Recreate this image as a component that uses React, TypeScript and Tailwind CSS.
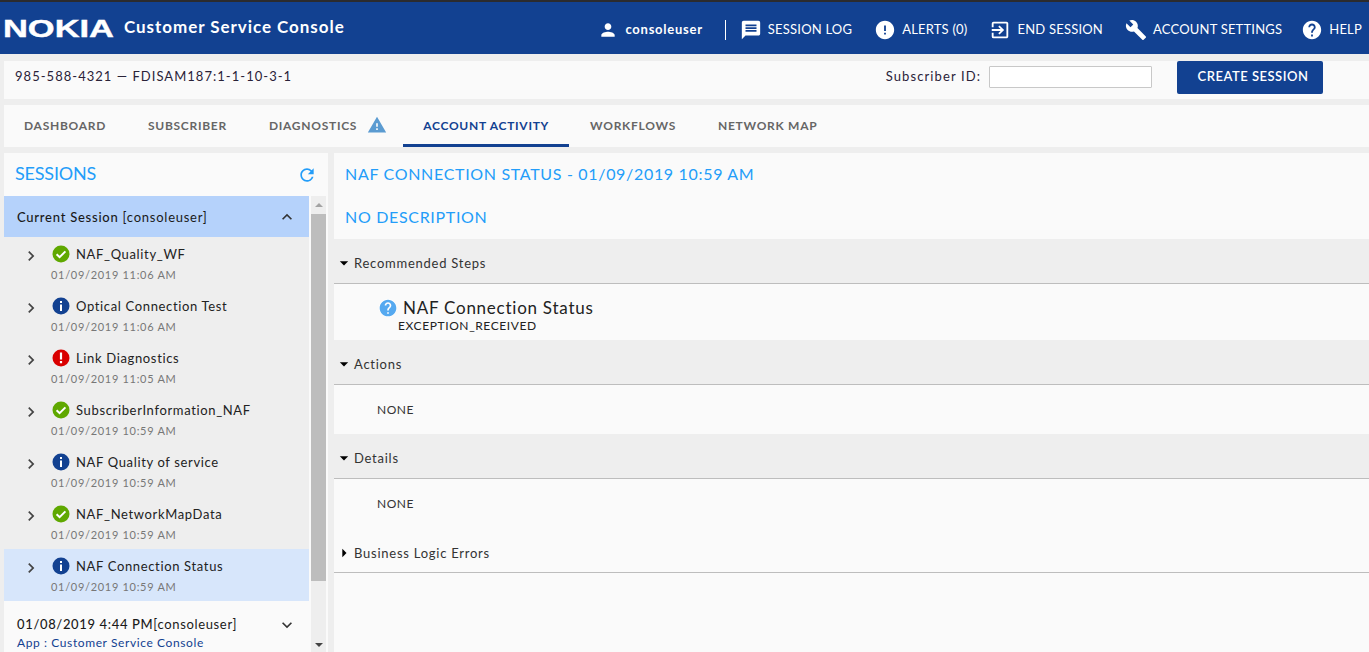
import { MdPerson, MdMessage, MdError, MdExitToApp, MdBuild, MdHelp, MdRefresh, MdExpandLess, MdExpandMore, MdChevronRight, MdArrowDropDown, MdArrowRight, MdWarning } from 'react-icons/md';

type Status = 'ok' | 'info' | 'error';

const sessions: { name: string; date: string; status: Status; active?: boolean }[] = [
  { name: 'NAF_Quality_WF', date: '01/09/2019 11:06 AM', status: 'ok' },
  { name: 'Optical Connection Test', date: '01/09/2019 11:06 AM', status: 'info' },
  { name: 'Link Diagnostics', date: '01/09/2019 11:05 AM', status: 'error' },
  { name: 'SubscriberInformation_NAF', date: '01/09/2019 10:59 AM', status: 'ok' },
  { name: 'NAF Quality of service', date: '01/09/2019 10:59 AM', status: 'info' },
  { name: 'NAF_NetworkMapData', date: '01/09/2019 10:59 AM', status: 'ok' },
  { name: 'NAF Connection Status', date: '01/09/2019 10:59 AM', status: 'info', active: true },
];

const tabs = ['DASHBOARD', 'SUBSCRIBER', 'DIAGNOSTICS', 'ACCOUNT ACTIVITY', 'WORKFLOWS', 'NETWORK MAP'];

const tabPadding = (t: string) => {
  if (t === 'DASHBOARD') return 'pl-[20px] pr-[21px]';
  if (t === 'DIAGNOSTICS') return 'pl-[21px] pr-[16px]';
  if (t === 'ACCOUNT ACTIVITY') return 'px-[20px]';
  return 'px-[21px]';
};

const StatusIcon = ({ status }: { status: Status }) => {
  const fill = status === 'ok' ? '#5fa800' : status === 'info' ? '#124191' : '#d90000';
  return (
    <svg viewBox="0 0 18 18" className="w-[18px] h-[18px] shrink-0">
      <circle cx="9" cy="9" r="8.5" fill={fill} />
      {status === 'ok' && <path d="M4.6 9.2l3 3 5.8-5.8" fill="none" stroke="#fff" strokeWidth="2" />}
      {status === 'info' && <path d="M8 4h2v2H8zM8 7.5h2V14H8z" fill="#fff" />}
      {status === 'error' && <path d="M7.9 3.6h2.2v7H7.9zM7.9 12h2.2v2.2H7.9z" fill="#fff" />}
    </svg>
  );
};

const NavItem = ({ icon, label, className = '' }: { icon: React.ReactNode; label: string; className?: string }) => (
  <div className={`flex items-center gap-[6px] text-[13px] tracking-[0.2px] text-white ${className}`}>
    {icon}
    <span>{label}</span>
  </div>
);

const SectionHeader = ({ label, open = true, bg = 'bg-[#eeeeee]', h = 'h-[45px]' }: { label: string; open?: boolean; bg?: string; h?: string }) => (
  <div className={`${bg} ${h} flex items-center pt-[4px] border-b border-[#bdbdbd] text-[13px] tracking-[0.75px] text-[#333] shrink-0`}>
    <span className="w-[20px] flex justify-center">
      {open ? <MdArrowDropDown className="w-[20px] h-[20px] text-black" /> : <MdArrowRight className="w-[20px] h-[20px] text-black" />}
    </span>
    <span className="pt-[2px]">{label}</span>
  </div>
);

const App = () => {
  return (
    <div className="h-[652px] w-[1369px] overflow-hidden bg-[#eeeeee] flex flex-col font-['Lato','Noto_Sans',sans-serif]">
      <header className="h-[54px] shrink-0 bg-[#124191] border-t-[2px] border-[#2b2b2e] flex items-center pl-[4px]">
        <svg viewBox="0 0 109 24" className="w-[109px] h-[24px] shrink-0 overflow-visible">
          <text x="-1" y="21" textLength="111" lengthAdjust="spacingAndGlyphs" fill="#fff" stroke="#fff" strokeWidth="0.4" fontSize="24" fontWeight="700" fontFamily="Liberation Sans, sans-serif">NOKIA</text>
        </svg>
        <span className="ml-[11px] pb-[2px] text-[17px] font-bold tracking-[0.95px] text-white">Customer Service Console</span>
        <div className="ml-auto flex items-center pr-[7px] pt-[4px]">
          <MdPerson className="w-[20px] h-[20px] text-white" />
          <span className="ml-[7px] text-[13px] font-bold tracking-[0.75px] text-white">consoleuser</span>
          <span className="ml-[22px] mr-[14px] h-[20px] w-px bg-white" />
          <div className="flex items-center gap-[22px]">
            <NavItem icon={<MdMessage className="w-[22px] h-[22px]" />} label="SESSION LOG" />
            <NavItem icon={<MdError className="w-[22px] h-[22px]" />} label="ALERTS (0)" />
            <NavItem icon={<MdExitToApp className="w-[22px] h-[22px]" />} label="END SESSION" />
            <NavItem icon={<MdBuild className="w-[22px] h-[22px]" />} label="ACCOUNT SETTINGS" />
            <NavItem icon={<MdHelp className="w-[22px] h-[22px]" />} label="HELP" className="-ml-[3px]" />
          </div>
        </div>
      </header>

      <div className="mt-[7px] ml-[4px] h-[38px] shrink-0 bg-[#fafafa] flex items-center pl-[11px] pb-[6px] text-[13px] tracking-[1.03px] text-[#2a2238]">
        <span>985-588-4321 — FDISAM187:1-1-10-3-1</span>
        <label className="ml-auto tracking-[1.1px]">Subscriber ID:</label>
        <input className="ml-[8px] w-[163px] h-[22px] bg-white border border-[#c8c8c8] rounded-[1px]" />
        <button className="ml-[25px] mr-[46px] w-[146px] h-[33px] pl-[6px] bg-[#124191] text-white rounded-[2px] text-[13px] tracking-[0.5px] font-semibold">CREATE SESSION</button>
      </div>

      <nav className="mt-[6px] ml-[4px] h-[42px] shrink-0 bg-[#fafafa] flex items-stretch text-[12px] font-bold tracking-[0.72px] text-[#666]">
        {tabs.map((t) => {
          const active = t === 'ACCOUNT ACTIVITY';
          return (
            <div
              key={t}
              className={`flex items-center pt-[3px] border-b-[3px] ${tabPadding(t)} ${active ? 'border-[#124191] text-[#124191]' : 'border-transparent'}`}
            >
              {t}
              {t === 'DIAGNOSTICS' && <MdWarning className="ml-[10px] -mt-[2px] w-[20px] h-[20px] text-[#5b9bd1]" />}
            </div>
          );
        })}
      </nav>

      <div className="mt-[6px] ml-[4px] flex-1 min-h-0 flex gap-[6px]">
        <aside className="w-[324px] shrink-0 bg-[#fafafa] flex flex-col overflow-hidden">
          <div className="h-[43px] shrink-0 flex items-center justify-between pl-[11px] pr-[11px] text-[18px] tracking-[-0.2px] text-[#239df9]">
            <span className="pb-[2px]">SESSIONS</span>
            <MdRefresh className="w-[20px] h-[20px]" />
          </div>
          <div className="flex-1 min-h-0 flex">
            <div className="w-[305px] shrink-0 flex flex-col">
              <div className="h-[41px] shrink-0 bg-[#b5d2fb] flex items-center justify-between pl-[13px] pr-[12px] text-[13px] tracking-[0.75px] text-[#1a1a1a]">
                <span className="pt-[2px]"><span className="font-medium">Current Session</span> [consoleuser]</span>
                <MdExpandLess className="w-[20px] h-[20px] text-[#333]" />
              </div>
              <div className="bg-[#eeeeee] shrink-0">
                {sessions.map((s) => (
                  <div key={s.name} className={`h-[52px] flex pl-[17px] pt-[8px] ${s.active ? 'bg-[#d7e6fb]' : ''}`}>
                    <MdChevronRight className="w-[20px] h-[20px] text-[#444] shrink-0 mt-[1px]" />
                    <div className="ml-[10px] flex flex-col">
                      <div className="flex items-center gap-[6px] h-[18px] ml-[1px] text-[13px] tracking-[0.65px] text-[#222]">
                        <StatusIcon status={s.status} />
                        <span className="pt-[2px]">{s.name}</span>
                      </div>
                      <span className="mt-[4px] text-[11px] tracking-[0.7px] text-[#777]">{s.date}</span>
                    </div>
                  </div>
                ))}
              </div>
              <div className="mt-[3px] pl-[13px] pr-[12px] pt-[11px]">
                <div className="flex items-center justify-between text-[13px] tracking-[0.65px] text-[#1a1a1a]">
                  <span><span className="font-medium">01/08/2019 4:44 PM</span>[consoleuser]</span>
                  <MdExpandMore className="w-[20px] h-[20px] text-[#333]" />
                </div>
                <div className="-mt-[1px] text-[12px] tracking-[0.6px] text-[#124191]">App : Customer Service Console</div>
              </div>
            </div>
            <div className="ml-[2px] w-[15px] shrink-0 flex flex-col items-center bg-[#eeeeee]">
              <div className="h-[18px] w-full flex items-center justify-center">
                <span className="w-0 h-0 border-x-[4px] border-x-transparent border-b-[4px] border-b-[#a3a3a3]" />
              </div>
              <div className="w-full h-[367px] bg-[#bdbdbd]" />
              <div className="mt-auto h-[14px] flex items-center justify-center">
                <span className="w-0 h-0 border-x-[4px] border-x-transparent border-t-[4px] border-t-[#444]" />
              </div>
            </div>
          </div>
        </aside>

        <main className="flex-1 min-w-0 bg-[#fafafa] flex flex-col overflow-hidden">
          <div className="h-[86px] shrink-0 pl-[11px] text-[16px] tracking-[0.68px] text-[#239df9]">
            <div className="h-[42px] flex items-center">NAF CONNECTION STATUS - 01/09/2019 10:59 AM</div>
            <div className="h-[44px] flex items-center">NO DESCRIPTION</div>
          </div>
          <SectionHeader label="Recommended Steps" />
          <div className="h-[56px] shrink-0 pl-[45px] pt-[14px]">
            <div className="flex items-center gap-[6px] h-[20px] text-[17px] tracking-[0.75px] text-[#222]">
              <span className="w-[18px] h-[18px] rounded-full bg-white flex items-center justify-center">
                <MdHelp className="w-[20px] h-[20px] shrink-0 text-[#55a9f0]" />
              </span>
              NAF Connection Status
            </div>
            <div className="ml-[19px] mt-[1px] text-[12px] tracking-[0.6px] leading-[14px] text-[#222]">EXCEPTION_RECEIVED</div>
          </div>
          <SectionHeader label="Actions" />
          <div className="h-[49px] shrink-0 pl-[43px] flex items-center text-[12px] tracking-[0.5px] text-[#333]">NONE</div>
          <SectionHeader label="Details" />
          <div className="h-[50px] shrink-0 pl-[43px] flex items-center text-[12px] tracking-[0.5px] text-[#333]">NONE</div>
          <SectionHeader label="Business Logic Errors" open={false} bg="bg-[#fafafa]" h="h-[44px]" />
        </main>
      </div>
    </div>
  );
};

export default App;
